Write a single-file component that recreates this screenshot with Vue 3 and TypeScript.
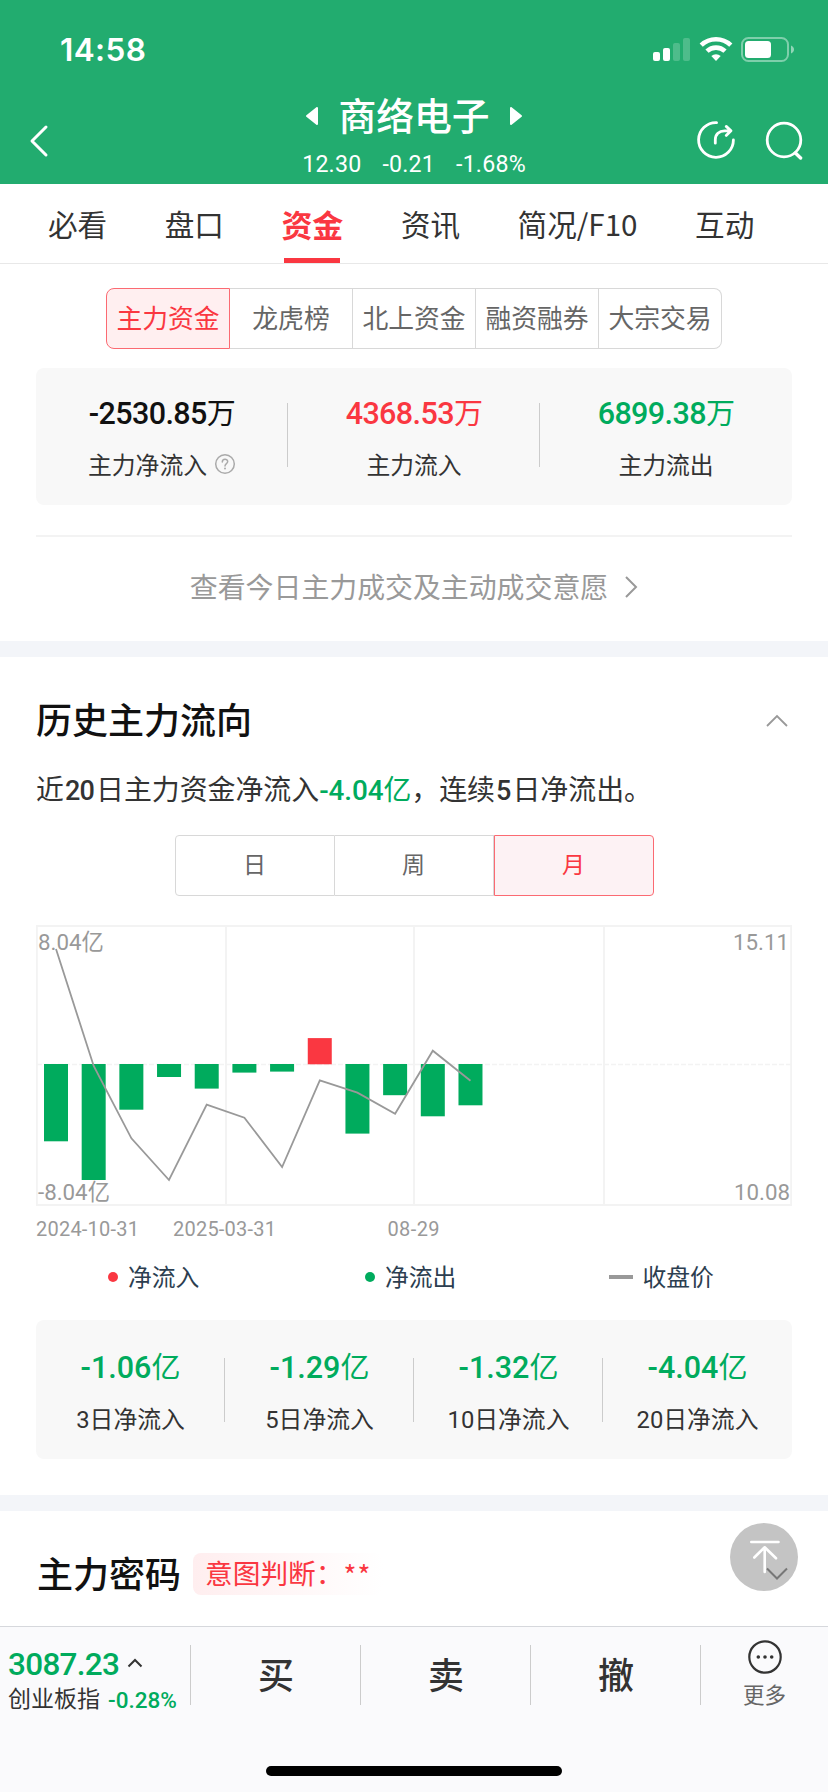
<script setup lang="ts">
interface Stat {
  value: string
  unit: string
  label: string
  tone: 'dark' | 'up' | 'down'
  help?: boolean
}

const tabs: string[] = ['必看', '盘口', '资金', '资讯', '简况/F10', '互动']
const fundTypes: string[] = ['主力资金', '龙虎榜', '北上资金', '融资融券', '大宗交易']
const periods: string[] = ['日', '周', '月']

const today: Stat[] = [
  { value: '-2530.85', unit: '万', label: '主力净流入', tone: 'dark', help: true },
  { value: '4368.53', unit: '万', label: '主力流入', tone: 'up' },
  { value: '6899.38', unit: '万', label: '主力流出', tone: 'down' },
]

const recent: Stat[] = [
  { value: '-1.06', unit: '亿', label: '3日净流入', tone: 'down' },
  { value: '-1.29', unit: '亿', label: '5日净流入', tone: 'down' },
  { value: '-1.32', unit: '亿', label: '10日净流入', tone: 'down' },
  { value: '-4.04', unit: '亿', label: '20日净流入', tone: 'down' },
]

// Bar lengths relative to the zero line, in chart pixels; positive is inflow.
const flows: number[] = [-77.3, -116, -45.7, -13, -24.6, -8.6, -7.6, 26.2, -69.6, -31.2, -52.3, -41.3]
// Closing price line, as chart y positions.
const closes: number[] = [24, 141, 213.3, 255, 179.7, 192.7, 242, 155.3, 167.7, 188.7, 125.7, 155.7]
const zeroY = 139.3
const pitch = 37.68

const bars = flows.map((f, i) => ({
  x: 8 + i * pitch,
  y: f > 0 ? zeroY - f : zeroY - 0.3,
  h: Math.abs(f),
  up: f > 0,
}))
const line = closes.map((y, i) => `${(20 + i * pitch).toFixed(1)},${y}`).join(' ')
const trades: string[] = ['买', '卖', '撤']
</script>

<template>
  <div class="screen">
    <header class="top">
      <div class="status">
        <span class="clock">14:58</span>
        <svg class="status-icons" width="144" height="28" viewBox="0 0 144 28">
          <g fill="#fff">
            <rect x="3" y="17" width="7" height="9" rx="2" />
            <rect x="13" y="13" width="7" height="13" rx="2" />
            <rect x="23" y="8" width="7" height="18" rx="2" opacity=".2" />
            <rect x="33" y="3" width="7" height="23" rx="2" opacity=".2" />
          </g>
          <g fill="none" stroke="#fff" stroke-width="4.6">
            <path d="M51.2 10.2a21.5 21.5 0 0 1 29.6 0" />
            <path d="M57 16.2a13 13 0 0 1 18 0" />
          </g>
          <path d="M66 26l-4.7-5a7 7 0 0 1 9.4 0z" fill="#fff" />
          <rect x="92" y="3" width="46" height="23" rx="6.5" fill="none" stroke="#fff" stroke-opacity=".42" stroke-width="2" />
          <rect x="95" y="6" width="26" height="17" rx="3.5" fill="#fff" />
          <path d="M141 10.5c4 1.5 4 6.5 0 8z" fill="#fff" opacity=".5" />
        </svg>
      </div>
      <div class="nav">
        <svg class="back" width="20" height="34" viewBox="0 0 20 34">
          <path d="M17 3L3 17l14 14" fill="none" stroke="#fff" stroke-width="3" stroke-linecap="round" stroke-linejoin="round" />
        </svg>
        <div class="stock">
          <div class="name">
            <svg width="12" height="18" viewBox="0 0 12 18"><path d="M11 1v16L1 9z" fill="#fff" stroke="#fff" stroke-width="2" stroke-linejoin="round" /></svg>
            <span>商络电子</span>
            <svg width="12" height="18" viewBox="0 0 12 18"><path d="M1 1v16l10-8z" fill="#fff" stroke="#fff" stroke-width="2" stroke-linejoin="round" /></svg>
          </div>
          <div class="quote"><span>12.30</span><span>-0.21</span><span>-1.68%</span></div>
        </div>
        <div class="actions">
          <svg width="40" height="40" viewBox="0 0 40 40" fill="none" stroke="#fff" stroke-width="2.8" stroke-linecap="round" stroke-linejoin="round">
            <path d="M20.6 2.6A17.4 17.4 0 1 0 37.4 20" />
            <path d="M19.3 23.2v-3.4c0-5.4 3.8-9 9.2-9h6.3M30.2 6.4l4.8 4.4-4.8 4.6" />
          </svg>
          <svg width="40" height="40" viewBox="0 0 40 40" fill="none" stroke="#fff" stroke-width="2.8" stroke-linecap="round">
            <circle cx="20" cy="20" r="16.8" />
            <path d="M31.4 33l5.2 5" stroke-width="3.4" />
          </svg>
        </div>
      </div>
    </header>

    <nav class="tabs">
      <span v-for="(t, i) in tabs" :key="t" class="tab" :class="{ active: i === 2 }">{{ t }}</span>
    </nav>

    <section class="today">
      <div class="segment types">
        <span v-for="(t, i) in fundTypes" :key="t" :class="{ on: i === 0 }">{{ t }}</span>
      </div>
      <div class="card">
        <div v-for="s in today" :key="s.label" class="stat">
          <div class="value" :class="s.tone">{{ s.value }}<i>{{ s.unit }}</i></div>
          <div class="label">
            {{ s.label }}
            <svg v-if="s.help" width="22" height="22" viewBox="0 0 22 22">
              <circle cx="11" cy="11" r="9.3" fill="none" stroke="#aaa" stroke-width="1.5" />
              <path d="M8.3 9c0-3.6 5.4-3.6 5.4-.4 0 2-2.7 2-2.7 4.3" fill="none" stroke="#aaa" stroke-width="1.5" stroke-linecap="round" />
              <circle cx="11" cy="15.6" r="1" fill="#aaa" />
            </svg>
          </div>
        </div>
      </div>
      <div class="more-link">
        <span>查看今日主力成交及主动成交意愿</span>
        <svg width="14" height="24" viewBox="0 0 14 24"><path d="M2 2l10 10L2 22" fill="none" stroke="#999" stroke-width="2" /></svg>
      </div>
    </section>

    <section class="history">
      <div class="heading">
        <h2>历史主力流向</h2>
        <svg width="24" height="14" viewBox="0 0 24 14"><path d="M2 12L12 2l10 10" fill="none" stroke="#999" stroke-width="1.8" /></svg>
      </div>
      <p class="summary">近<b>20</b>日主力资金净流入<em>-4.04<i>亿</i></em>，连续<b>5</b>日净流出。</p>
      <div class="segment periods">
        <span v-for="(p, i) in periods" :key="p" :class="{ on: i === 2 }">{{ p }}</span>
      </div>
      <svg class="chart" width="756" height="320" viewBox="0 0 756 320">
        <g fill="none" stroke="#f3f3f3" stroke-width="2">
          <rect x=".8" y="1" width="754.4" height="279" />
          <path d="M190 1v279M378 1v279M568 1v279" />
          <path d="M1 139.4h754" stroke-width="1.5" stroke-dasharray="5 2" />
        </g>
        <rect v-for="(b, i) in bars" :key="i" :x="b.x" :y="b.y" width="24" :height="b.h" :fill="b.up ? '#fa3741' : '#00ab5d'" />
        <polyline :points="line" fill="none" stroke="#999" stroke-width="1.8" />
        <g class="scale">
          <text x="2" y="25">8.04<tspan>亿</tspan></text>
          <text x="2" y="275">-8.04<tspan>亿</tspan></text>
          <text x="753" y="25" text-anchor="end">15.11</text>
          <text x="754" y="275" text-anchor="end">10.08</text>
        </g>
        <g class="dates">
          <text x="0" y="310.5" textLength="103">2024-10-31</text>
          <text x="137" y="310.5" textLength="103">2025-03-31</text>
          <text x="351.5" y="310.5" textLength="52">08-29</text>
        </g>
      </svg>
      <div class="legend">
        <span><i class="dot up-bg"></i>净流入</span>
        <span><i class="dot down-bg"></i>净流出</span>
        <span><i class="dash"></i>收盘价</span>
      </div>
      <div class="card four">
        <div v-for="s in recent" :key="s.label" class="stat">
          <div class="value" :class="s.tone">{{ s.value }}<i>{{ s.unit }}</i></div>
          <div class="label">{{ s.label }}</div>
        </div>
      </div>
    </section>

    <section class="code">
      <h2>主力密码</h2>
      <span class="tag">意图判断：<i>**</i></span>
      <svg class="to-top" width="68" height="68" viewBox="0 0 68 68">
        <circle cx="34" cy="34" r="34" fill="#c4c4c4" />
        <g fill="none" stroke="#fff" stroke-width="2.6" stroke-linecap="round" stroke-linejoin="round">
          <path d="M21.3 19h27.2M34.7 49V24.5M24.3 34.5l10.4-10.2 11.3 11" />
        </g>
        <path d="M37 45.5l10 10 10-10" fill="none" stroke="#777" stroke-width="2" />
      </svg>
    </section>

    <footer class="bottom">
      <div class="index">
        <div class="points">
          3087.23
          <svg width="16" height="10" viewBox="0 0 16 10"><path d="M1.5 8.5L8 2l6.5 6.5" fill="none" stroke="#333" stroke-width="2" /></svg>
        </div>
        <div class="index-name"><span>创业板指</span><b>-0.28%</b></div>
      </div>
      <div v-for="t in trades" :key="t" class="trade">{{ t }}</div>
      <div class="more">
        <svg width="34" height="34" viewBox="0 0 34 34">
          <circle cx="17" cy="17" r="15.7" fill="none" stroke="#333" stroke-width="2.2" />
          <g fill="#333"><circle cx="10.3" cy="17" r="1.8" /><circle cx="17" cy="17" r="1.8" /><circle cx="23.7" cy="17" r="1.8" /></g>
        </svg>
        <span>更多</span>
      </div>
      <div class="home"></div>
    </footer>
  </div>
</template>

<style>
body {
  margin: 0;
  background: #fff;
}
</style>

<style scoped>
* {
  box-sizing: border-box;
}
.screen {
  width: 828px;
  height: 1792px;
  display: flex;
  flex-direction: column;
  overflow: hidden;
  background: #fff;
  color: #333;
  font-family: Roboto, "Noto Sans CJK SC", sans-serif;
}
svg {
  display: block;
  flex: none;
}
i,
em {
  font-style: normal;
}
h2 {
  margin: 0;
  font-size: 36px;
  line-height: 52px;
  height: 50px;
  font-weight: 500;
  color: #111;
}
.top {
  height: 184px;
  flex: none;
  background: #22ac6f;
  color: #fff;
}
.status {
  height: 88px;
  padding: 34px 34px 0 60px;
  display: flex;
  justify-content: space-between;
}
.status-icons {
  margin-top: 1px;
}
.clock {
  font: 600 31.5px/32px Inter, sans-serif;
  letter-spacing: 0.4px;
}
.nav {
  height: 96px;
  display: grid;
  grid-template-columns: 200px 1fr 200px;
}
.back {
  margin: 36px 0 0 29px;
}
.stock {
  display: flex;
  flex-direction: column;
  align-items: center;
}
.name {
  display: flex;
  align-items: center;
  gap: 20px;
  height: 56px;
  font-size: 37.8px;
  font-weight: 500;
}
.name span {
  height: 56px;
  line-height: 58px;
}
.quote {
  display: flex;
  gap: 21px;
  font-size: 23.2px;
  line-height: 41px;
  letter-spacing: 0.2px;
}
.actions {
  display: flex;
  gap: 28px;
  padding: 32px 0 0 68px;
}
.tabs {
  height: 80px;
  flex: none;
  display: flex;
  gap: 57.5px;
  padding-left: 48px;
  border-bottom: 1px solid #e8e8e8;
  font: 29.6px/79px "Noto Sans CJK SC", sans-serif;
}
.tab.active {
  display: flex;
  flex-direction: column;
  align-items: center;
  height: 79px;
  font-size: 31px;
  font-weight: 700;
  color: #fa3741;
}
.tab.active::after {
  content: "";
  width: 56px;
  height: 5px;
  margin-top: -5px;
  background: #fa3741;
}
.today {
  height: 377px;
  flex: none;
  padding: 24px 36px 0;
}
.segment {
  display: flex;
  margin: 0 auto;
  height: 61px;
}
.segment span {
  flex: 1;
  border: 1.5px solid #d8d8d8;
  border-left-width: 0;
  text-align: center;
  line-height: 60px;
  color: #666;
}
.segment span:first-child {
  border-left-width: 1px;
}
.segment .on {
  color: #fa3741;
  border-color: #fb6a72;
  background: #ffeff0;
}
.types {
  width: 616px;
  font-size: 25.8px;
}
.types span:first-child {
  border-radius: 8px 0 0 8px;
}
.types span:last-child {
  border-radius: 0 8px 8px 0;
}
.card {
  display: flex;
  height: 137px;
  margin-top: 19px;
  border-radius: 8px;
  background: #f8f8f8;
}
.stat {
  flex: 1;
  display: flex;
  flex-direction: column;
  align-items: center;
  padding-top: 26px;
  background: linear-gradient(#ccc, #ccc) 100% 35px / 1px 64px no-repeat;
}
.stat:last-child {
  background: none;
}
.value {
  height: 40px;
  line-height: 40px;
  font-size: 30.5px;
  font-weight: 500;
  letter-spacing: -0.6px;
}
.value i {
  font-size: 29px;
  font-weight: 400;
}
.dark {
  color: #111;
}
.up {
  color: #fa3741;
}
.down {
  color: #00ab5d;
}
.label {
  display: flex;
  align-items: center;
  gap: 7px;
  margin-top: 11px;
  height: 36px;
  font-size: 23.8px;
  white-space: nowrap;
}
.label svg {
  margin-top: 2px;
}
.more-link {
  margin-top: 30px;
  border-top: 2px solid #f3f3f3;
  height: 101px;
  display: flex;
  align-items: center;
  justify-content: center;
  gap: 16px;
  font-size: 27.9px;
  color: #999;
}
.more-link span {
  margin-top: -2px;
}
.history {
  flex: none;
  height: 854px;
  border-top: 16px solid #f3f5f9;
  padding: 39px 36px 0;
}
.heading {
  display: flex;
  align-items: center;
  justify-content: space-between;
  padding-right: 3px;
}
.summary {
  margin: 24px 0 0;
  height: 40px;
  font-size: 27.9px;
  line-height: 41px;
  white-space: nowrap;
}
.summary b {
  font-weight: 500;
  font-size: 27px;
  letter-spacing: -0.8px;
  margin: 0 2px 0 1px;
}
.summary em {
  color: #00ab5d;
  font-weight: 500;
  letter-spacing: -0.1px;
}
.summary em i {
  font-weight: 400;
}
.periods {
  width: 479px;
  margin-top: 25px;
  font-size: 23px;
}
.periods span:first-child {
  border-radius: 4px 0 0 4px;
}
.periods span:last-child {
  border-radius: 0 4px 4px 0;
  border-left-width: 1px;
}
.periods .on {
  background: #fdf2f4;
}
.chart {
  margin-top: 29px;
}
.scale {
  font-size: 22.3px;
  fill: #999;
}
.dates {
  font-size: 20px;
  fill: #999;
}
.legend {
  display: grid;
  grid-template-columns: 257px 243.5px 1fr;
  margin-top: 10px;
  padding-left: 72px;
  height: 40px;
  font-size: 23.8px;
  color: #2c3e50;
}
.legend span {
  display: flex;
  align-items: center;
  gap: 10px;
}
.legend i {
  margin-top: 4px;
}
.dot {
  width: 10px;
  height: 10px;
  border-radius: 50%;
}
.up-bg {
  background: #fa3741;
}
.down-bg {
  background: #00ab5d;
}
.dash {
  width: 24px;
  height: 4px;
  background: #999;
}
.four {
  height: 139px;
  margin-top: 25px;
}
.four .stat {
  background-position: 100% 38px;
}
.four .stat:nth-child(n) {
  padding-top: 28px;
}
.four .value {
  letter-spacing: 0;
}
.code {
  position: relative;
  flex: none;
  height: 131px;
  border-top: 16px solid #f3f5f9;
  padding: 39px 37px 0;
  display: flex;
  align-items: flex-start;
  gap: 12px;
}
.tag {
  display: flex;
  margin-top: 3px;
  height: 42px;
  width: 190px;
  padding-left: 12px;
  border-radius: 8px;
  background: linear-gradient(90deg, #ffeeef, #fff);
  color: #fa3741;
  font: 27.7px/38px "Noto Sans CJK SC", sans-serif;
  white-space: nowrap;
}
.tag i {
  line-height: 42px;
  letter-spacing: 1px;
}
.to-top {
  position: absolute;
  right: 30px;
  top: 12px;
}
.bottom {
  flex: none;
  height: 166px;
  position: relative;
  display: grid;
  grid-template-columns: 191px 170px 170px 170px 1fr;
  border-top: 1px solid #d6d8dc;
  background: #fafafc;
}
.index,
.trade {
  height: 98px;
  background: linear-gradient(#ccc, #ccc) 100% 18px / 1px 60px no-repeat;
}
.index {
  padding: 18px 0 0 8px;
}
.points {
  display: flex;
  align-items: center;
  gap: 8px;
  height: 38px;
  font-size: 31.5px;
  font-weight: 500;
  letter-spacing: -0.7px;
  color: #00ab5d;
}
.points svg {
  margin-top: -3px;
}
.index-name {
  display: flex;
  align-items: center;
  height: 34px;
  font-size: 23px;
  line-height: 36px;
  white-space: nowrap;
}
.index-name span {
  height: 36px;
}
.index-name b {
  margin-left: 8px;
  font-weight: 500;
  font-size: 22.5px;
  color: #00ab5d;
}
.trade {
  text-align: center;
  font-size: 36px;
  font-weight: 500;
  line-height: 101px;
}
.more {
  display: flex;
  flex-direction: column;
  align-items: center;
  padding-top: 13px;
  font-size: 21.5px;
  line-height: 43px;
  color: #666;
}
.home {
  position: absolute;
  left: 266px;
  top: 139px;
  width: 296px;
  height: 10px;
  border-radius: 5px;
  background: #000;
}
</style>
